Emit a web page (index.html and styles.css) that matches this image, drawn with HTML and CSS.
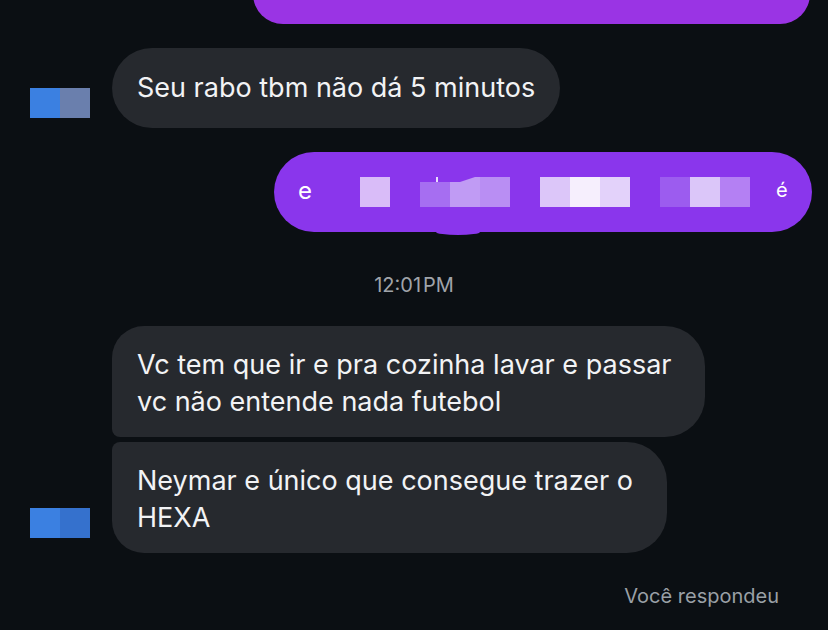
FILE: index.html
```html
<!DOCTYPE html>
<html>
<head>
    <title>Conversa</title>
    <link rel="stylesheet" href="styles.css">
</head>
<body>
    <div class="thread">
        <div class="row outgoing">
            <div class="bubble sent top-cut"></div>
        </div>

        <div class="row incoming first">
            <div class="avatar">
                <span class="px blue"></span><span class="px slate"></span>
            </div>
            <div class="bubble received single">Seu rabo tbm não dá 5 minutos</div>
        </div>

        <div class="row outgoing second">
            <div class="bubble sent blurred">
                <span class="letter">e</span>
                <span class="px p1 gap-a"></span>
                <span class="blockset gap-b">
                    <span class="px p2"></span><span class="px p3"></span><span class="px p4"></span>
                    <span class="notch"></span>
                </span>
                <span class="blockset gap-c">
                    <span class="px p5"></span><span class="px p6"></span><span class="px p7"></span>
                </span>
                <span class="blockset gap-c">
                    <span class="px p8"></span><span class="px p9"></span><span class="px p10"></span>
                </span>
                <span class="end-letter">é</span>
                <span class="tail"></span>
            </div>
        </div>

        <div class="timestamp">12:01&#8202;PM</div>

        <div class="row incoming group">
            <div class="avatar">
                <span class="px blue"></span><span class="px blue-dark"></span>
            </div>
            <div class="stack">
                <div class="bubble received head">Vc tem que ir e pra cozinha lavar e passar<br>vc não entende nada futebol</div>
                <div class="bubble received tailmsg">Neymar e único que consegue trazer o<br>HEXA</div>
            </div>
        </div>

        <div class="status">Você respondeu</div>
    </div>
</body>
</html>
```

FILE: styles.css
```css
body {
    margin: 0;
    padding: 0;
    background-color: #0b0f13;
    font-family: Inter, "Noto Sans", sans-serif;
    color: #f2f3f5;
    overflow: hidden;
}
.thread {
    display: flex;
    flex-direction: column;
    width: 828px;
    height: 630px;
}
.row {
    display: flex;
    align-items: flex-end;
}
.outgoing {
    justify-content: flex-end;
    padding-right: 16px;
}
.incoming {
    padding-left: 30px;
}
.bubble {
    box-sizing: border-box;
    font-size: 27px;
    line-height: 37px;
}
.sent {
    background: #8a36ec;
    border-radius: 40px;
}
.top-cut {
    width: 557px;
    height: 80px;
    margin-top: -56px;
    margin-right: 2px;
    background: #9a34e4;
    border-radius: 30px;
}
.received {
    background: #26292e;
    border-radius: 40px;
    padding: 21px 25px;
}
.single {
    height: 80px;
    padding-top: 21px;
}
.first {
    margin-top: 24px;
}
.avatar {
    display: flex;
    width: 60px;
    height: 30px;
    margin-right: 22px;
    margin-bottom: 10px;
}
.group .avatar {
    margin-bottom: 15px;
}
.px {
    display: inline-block;
    width: 30px;
    height: 30px;
    flex-shrink: 0;
}
.blue { background: #3b80e1; }
.slate { background: #6a7fad; }
.blue-dark { background: #3571cd; }

.second {
    margin-top: 24px;
}
.blurred {
    position: relative;
    width: 538px;
    height: 80px;
    display: flex;
    align-items: center;
    padding-left: 24px;
    color: #ffffff;
}
.letter {
    font-size: 24px;
    width: 16px;
    margin-top: -4px;
}
.blockset {
    position: relative;
    display: flex;
}
.gap-a { margin-left: 46px; }
.gap-b { margin-left: 30px; }
.gap-c { margin-left: 30px; }
.p1 { background: #d9bcf8; }
.p2 { background: #a66ef1; }
.p3 { background: #c09bf4; }
.p4 { background: #b98ef3; }
.p5 { background: #dcc6f9; }
.p6 { background: #f6effd; }
.p7 { background: #e3d2fa; }
.p8 { background: #9c5cef; }
.p9 { background: #dbc6f9; }
.p10 { background: #b480f3; }
.notch {
    position: absolute;
    left: 0;
    top: 0;
    width: 60px;
    height: 5px;
    background: #8a36ec;
    clip-path: polygon(0 0, 100% 0, 55px 0, 40px 100%, 0 100%);
}
.notch::after {
    content: "";
    position: absolute;
    left: 16px;
    top: 0;
    width: 2px;
    height: 5px;
    background: #e9dcfb;
}
.end-letter {
    margin-left: 26px;
    margin-top: -4px;
    font-size: 20px;
}
.tail {
    position: absolute;
    left: 162px;
    bottom: -3px;
    width: 44px;
    height: 6px;
    border-radius: 0 0 50% 50%;
    background: #8a36ec;
}

.timestamp {
    margin-top: 41px;
    text-align: center;
    font-size: 20px;
    line-height: 24px;
    color: #a0a4aa;
}
.group {
    margin-top: 29px;
}
.stack {
    display: flex;
    flex-direction: column;
    align-items: flex-start;
    gap: 5px;
}
.head {
    border-radius: 32px 40px 40px 8px;
    padding: 20px 34px 14px 25px;
    height: 111px;
}
.tailmsg {
    border-radius: 8px 40px 40px 32px;
    padding: 20px 34px 14px 25px;
    height: 111px;
}
.status {
    margin-top: 31px;
    padding-right: 49px;
    text-align: right;
    font-size: 20px;
    line-height: 24px;
    color: #9aa0a6;
}
```
